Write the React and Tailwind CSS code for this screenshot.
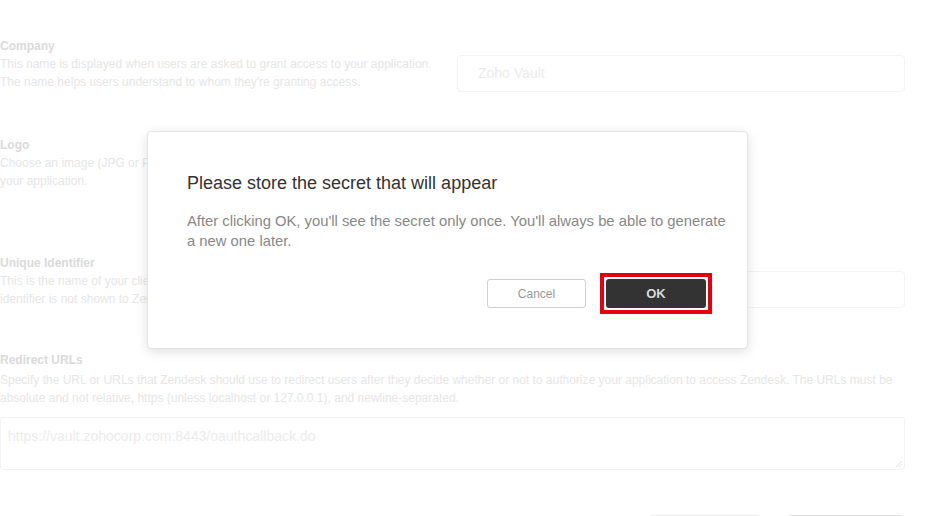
import React from 'react'

const font = { fontFamily: '"Liberation Sans", Arial, sans-serif' }

function Field({ label, lines, children, className = '' }) {
  return (
    <div className={`flex ${className}`}>
      <div className="w-[440px] shrink-0">
        <div className="text-[12px] leading-[18px] font-bold text-[#dadada]">{label}</div>
        {lines.map((l) => (
          <div key={l} className="text-[12px] leading-[18px] text-[#e6e6e6] whitespace-nowrap">{l}</div>
        ))}
      </div>
      <div className="flex-1 ml-[17px]">{children}</div>
    </div>
  )
}

function GhostInput({ placeholder }) {
  return (
    <div className="h-[37px] rounded-[4px] border border-[#f3f3f3] bg-white flex items-center px-[20px] text-[14px] text-[#ebebeb]">
      {placeholder}
    </div>
  )
}

export default function App() {
  return (
    <div className="relative w-[941px] h-[516px] overflow-hidden bg-white" style={font}>
      <div className="pt-[37px] pr-[36px]">
        <Field label="Company" lines={['This name is displayed when users are asked to grant access to your application.', "The name helps users understand to whom they're granting access."]}>
          <div className="mt-[18px]">
            <GhostInput placeholder="Zoho Vault" />
          </div>
        </Field>

        <Field className="mt-[44px]" label="Logo" lines={['Choose an image (JPG or PNG) that will appear when users are', 'your application.']}>
          <div />
        </Field>

        <Field className="mt-[64px]" label="Unique Identifier" lines={['This is the name of your client for use in code.', 'identifier is not shown to Zendesk users.']}>
          <div className="mt-[17px]">
            <GhostInput placeholder="" />
          </div>
        </Field>

        <div className="mt-[43px]">
          <div className="text-[12px] leading-[18px] font-bold text-[#dadada]">Redirect URLs</div>
          <div className="mt-[2px] text-[12px] leading-[18px] text-[#e6e6e6]">
            Specify the URL or URLs that Zendesk should use to redirect users after they decide whether or not to authorize your application to access Zendesk. The URLs must be absolute and not relative, https (unless localhost or 127.0.0.1), and newline-separated.
          </div>
          <div className="relative mt-[10px]">
            <textarea
              readOnly
              placeholder="https://vault.zohocorp.com:8443/oauthcallback.do"
              className="block w-full h-[53px] resize-none rounded-[3px] border border-[#f2f2f2] px-[7px] py-[9px] text-[14px] leading-[18px] placeholder:text-[#ececec] outline-none"
              style={font}
            />
            <svg className="absolute right-[2px] bottom-[2px]" width="8" height="8" viewBox="0 0 8 8">
              <path d="M7 1L1 7M7 4L4 7" stroke="#e2e2e2" strokeWidth="1" />
            </svg>
          </div>
        </div>

        <div className="mt-[45px] flex justify-end gap-[25px] pr-[2px]">
          <div className="w-[114px] h-[30px] rounded-[4px] border border-[#ececec]" />
          <div className="w-[116px] h-[30px] rounded-[4px] border-t-2 border-[#dedede] bg-[#fafafa]" />
        </div>
      </div>

      {/* modal */}
      <div className="absolute left-[147px] top-[131px] w-[601px] h-[218px] bg-white rounded-[4px] border border-[#e4e4e4] shadow-[0_3px_12px_rgba(0,0,0,0.12)] pt-[40px] pl-[39px] pr-[40px]">
        <div className="text-[18px] leading-[22px] text-[#333]">Please store the secret that will appear</div>
        <div className="mt-[17px] w-[545px] text-[14.8px] leading-[20px] text-[#888]">
          After clicking OK, you'll see the secret only once. You'll always be able to generate a new one later.
        </div>
        <div className="mt-[22px] mr-[-5px] flex justify-end items-center">
          <button className="w-[99px] h-[29px] rounded-[3px] border border-[#d0d0d0] bg-white text-[12px] text-[#999]" style={font}>
            Cancel
          </button>
          <div className="ml-[14px] p-[2px] border-[4px] border-[#e4000f]">
            <button className="block w-[100px] h-[29px] rounded-[3px] bg-[#333] text-[13px] font-bold text-[#d8d8d8]" style={font}>
              OK
            </button>
          </div>
        </div>
      </div>
    </div>
  )
}
